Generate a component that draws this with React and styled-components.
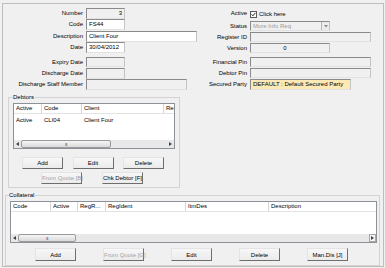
import React from 'react';
import styled, { createGlobalStyle } from 'styled-components';

const GlobalStyle = createGlobalStyle`
  html, body { margin: 0; padding: 0; background: #f0f0f0; }
  body {
    font-family: "Liberation Sans", Arial, sans-serif;
    font-size: 6px;
    color: #000;
  }
`;

const Panel = styled.div`
  box-sizing: border-box;
  width: 382px;
  height: 264px;
  margin: 3px 0 0 2px;
  border: 1px solid #bdbdbd;
  display: flex;
  flex-direction: column;
`;

const FormGrid = styled.div`
  display: grid;
  margin: 4px 0 0 2px;
  grid-template-columns: 78px 111px 47px 121px;
  grid-template-rows: 11px 12px 11px 15px 11px 11px 11px;
  column-gap: 3px;
  align-items: start;
`;

const Label = styled.div`
  justify-self: end;
  white-space: nowrap;
  line-height: 10px;
  margin-top: ${p => p.$top || 0}px;
`;

const Field = styled.div`
  box-sizing: border-box;
  position: relative;
  width: ${p => p.$w}px;
  height: ${p => p.$h || 11}px;
  margin-top: ${p => p.$top || 0}px;
  border: 1px solid;
  border-color: #8a8a8a #c4c4c4 #e2e2e2 #8a8a8a;
  background: ${p => p.$bg || '#f0f0f0'};
  color: ${p => (p.$muted ? '#9a9a9a' : '#000')};
  padding: ${p => p.$pad || '0 2px'};
  line-height: 9px;
  white-space: nowrap;
  overflow: hidden;
  text-align: ${p => p.$align || 'left'};
`;

const DropButton = styled.span`
  position: absolute;
  right: 0;
  top: 0;
  bottom: 0;
  width: 8px;
  box-sizing: border-box;
  border-left: 1px solid #b8b8b8;
  background: #ececec;
  display: flex;
  align-items: center;
  justify-content: center;
`;

const CheckRow = styled.div`
  display: flex;
  align-items: center;
  gap: 2px;
  margin-top: 2px;
  line-height: 8px;
`;

const CheckBox = styled.span`
  box-sizing: border-box;
  width: 7px;
  height: 7px;
  border: 1px solid #5a5a5a;
  background: #fff;
  display: flex;
`;

const GroupBox = styled.div`
  position: relative;
  box-sizing: border-box;
  width: ${p => p.$w}px;
  height: ${p => p.$h}px;
  margin: ${p => p.$m};
  border: 1px solid #d3d3d3;
  padding: 5px 4px 0 4px;
  display: flex;
  flex-direction: column;
`;

const Legend = styled.span`
  position: absolute;
  top: -5px;
  left: ${p => p.$left}px;
  padding: 0 1px 0 0;
  background: #f0f0f0;
  line-height: 8px;
`;

const List = styled.div`
  box-sizing: border-box;
  width: ${p => p.$w}px;
  height: ${p => p.$h}px;
  border: 1px solid #8d9198;
  background: #fff;
  display: flex;
  flex-direction: column;
  overflow: hidden;
`;

const HeaderRow = styled.div`
  display: flex;
  height: 9px;
  border-bottom: 1px solid #e3e3e3;
  flex-shrink: 0;
`;

const HeaderCell = styled.div`
  box-sizing: border-box;
  width: ${p => p.$w}px;
  flex-shrink: 0;
  border-right: 1px solid #d6d6d6;
  padding-left: 2px;
  line-height: 9px;
  white-space: nowrap;
  overflow: hidden;
`;

const Rows = styled.div`
  flex: 1;
  padding-top: 2px;
`;

const Row = styled.div`
  display: flex;
  height: 8px;
  line-height: 8px;
`;

const Cell = styled.div`
  box-sizing: border-box;
  width: ${p => p.$w}px;
  flex-shrink: 0;
  padding-left: 2px;
  white-space: nowrap;
`;

const ScrollBar = styled.div`
  display: flex;
  height: 8px;
  flex-shrink: 0;
  background: #e8e8e8;
  align-items: stretch;
`;

const ScrollArrow = styled.div`
  box-sizing: border-box;
  width: 7px;
  display: flex;
  align-items: center;
  justify-content: center;
  border: ${p => (p.$boxed ? '1px solid #a8a8a8' : 'none')};
  background: ${p => (p.$boxed ? '#f4f4f4' : 'transparent')};
`;

const Track = styled.div`
  flex: 1;
  display: flex;
`;

const Thumb = styled.div`
  box-sizing: border-box;
  width: ${p => p.$w}px;
  border: 1px solid #9a9a9a;
  border-radius: 2px;
  background: linear-gradient(#f6f6f6, #dadada);
  display: flex;
  align-items: center;
  justify-content: center;
  font-size: 4px;
  letter-spacing: -0.5px;
  color: #555;
`;

const ButtonRow = styled.div`
  display: flex;
  gap: ${p => p.$gap}px;
  padding-left: ${p => p.$pl}px;
  margin-top: ${p => p.$mt}px;
`;

const Button = styled.button`
  box-sizing: border-box;
  width: 41px;
  height: ${p => p.$h || 12}px;
  padding: 0;
  margin: 0;
  font-family: inherit;
  font-size: 6px;
  line-height: 8px;
  color: ${p => (p.disabled ? '#a3a3a3' : '#000')};
  background: linear-gradient(#f7f7f7, #ebebeb);
  border: 1px solid;
  border-color: #e4e4e4 #6e6e6e #6e6e6e #e4e4e4;
  white-space: nowrap;
`;

const Arrow = ({ dir }) => (
  <svg width="3" height="4" viewBox="0 0 3 4">
    <path d={dir === 'left' ? 'M3 0 L0 2 L3 4 Z' : 'M0 0 L3 2 L0 4 Z'} fill="#444" />
  </svg>
);

const ListView = ({ w, h, cols, rows, thumb, boxedRight }) => (
  <List $w={w} $h={h}>
    <HeaderRow>
      {cols.map(c => (
        <HeaderCell key={c.t} $w={c.w}>{c.t}</HeaderCell>
      ))}
    </HeaderRow>
    <Rows>
      {rows.map((r, i) => (
        <Row key={i}>
          {r.map((v, j) => (
            <Cell key={j} $w={cols[j].w}>{v}</Cell>
          ))}
        </Row>
      ))}
    </Rows>
    <ScrollBar>
      <ScrollArrow><Arrow dir="left" /></ScrollArrow>
      <Track>
        <Thumb $w={thumb}>III</Thumb>
      </Track>
      <ScrollArrow $boxed={boxedRight}><Arrow dir="right" /></ScrollArrow>
    </ScrollBar>
  </List>
);

const debtorCols = [
  { t: 'Active', w: 28 },
  { t: 'Code', w: 40 },
  { t: 'Client', w: 82 },
  { t: 'Reg', w: 30 },
];

const collateralCols = [
  { t: 'Code', w: 40 },
  { t: 'Active', w: 27 },
  { t: 'RegR...', w: 28 },
  { t: 'RegIdent', w: 80 },
  { t: 'ItmDes', w: 83 },
  { t: 'Description', w: 108 },
];

export default function App() {
  return (
    <>
      <GlobalStyle />
      <Panel>
        <FormGrid>
          <Label>Number</Label>
          <Field $w={39} $align="right">3</Field>
          <Label>Active</Label>
          <CheckRow>
            <CheckBox>
              <svg width="5" height="5" viewBox="0 0 5 5">
                <path d="M0.6 2.4 L1.9 3.8 L4.4 0.9" stroke="#222" strokeWidth="1" fill="none" />
              </svg>
            </CheckBox>
            <span>Click here</span>
          </CheckRow>

          <Label>Code</Label>
          <Field $w={39} $bg="#fff">FS44</Field>
          <Label $top={2}>Status</Label>
          <Field $w={80} $top={2} $h={10} $muted>
            More Info Req
            <DropButton>
              <svg width="4" height="3" viewBox="0 0 4 3">
                <path d="M0 0 L4 0 L2 2.5 Z" fill="#888" />
              </svg>
            </DropButton>
          </Field>

          <Label>Description</Label>
          <Field $w={111} $bg="#fff">Client Four</Field>
          <Label $top={1}>Register ID</Label>
          <Field $w={121} $top={1} $h={10} />

          <Label>Date</Label>
          <Field $w={39} $bg="#fff">30/04/2012</Field>
          <Label $top={1}>Version</Label>
          <Field $w={80} $top={1} $h={10} $align="center" $pad="0 10px 0 0">0</Field>

          <Label>Expiry Date</Label>
          <Field $w={39} $h={10} />
          <Label>Financial Pin</Label>
          <Field $w={121} $h={10} />

          <Label>Discharge Date</Label>
          <Field $w={39} />
          <Label>Debtor Pin</Label>
          <Field $w={121} $h={10} />

          <Label>Discharge Staff Member</Label>
          <Field $w={101} />
          <Label>Secured Party</Label>
          <Field $w={101} $bg="#fde9b6">DEFAULT : Default Secured Party</Field>
        </FormGrid>

        <GroupBox $w={172} $h={91} $m="7px 0 0 5px">
          <Legend $left={4}>Debtors</Legend>
          <ListView
            w={162}
            h={46}
            cols={debtorCols}
            rows={[['Active', 'CLI04', 'Client Four', '']]}
            thumb={90}
          />
          <ButtonRow $gap={9.5} $pl={9} $mt={8}>
            <Button>Add</Button>
            <Button>Edit</Button>
            <Button>Delete</Button>
          </ButtonRow>
          <ButtonRow $gap={20} $pl={28} $mt={3}>
            <Button disabled>From Quote [B]</Button>
            <Button>Chk Debtor [F]</Button>
          </ButtonRow>
        </GroupBox>

        <GroupBox $w={375} $h={71} $m="7px 0 0 2px">
          <Legend $left={3}>Collateral</Legend>
          <ListView
            w={367}
            h={42}
            cols={collateralCols}
            rows={[]}
            thumb={58}
            boxedRight
          />
          <ButtonRow $gap={27} $pl={25} $mt={5}>
            <Button $h={13}>Add</Button>
            <Button $h={13} disabled>From Quote [G]</Button>
            <Button $h={13}>Edit</Button>
            <Button $h={13}>Delete</Button>
            <Button $h={13}>Man.Dis [J]</Button>
          </ButtonRow>
        </GroupBox>
      </Panel>
    </>
  );
}
